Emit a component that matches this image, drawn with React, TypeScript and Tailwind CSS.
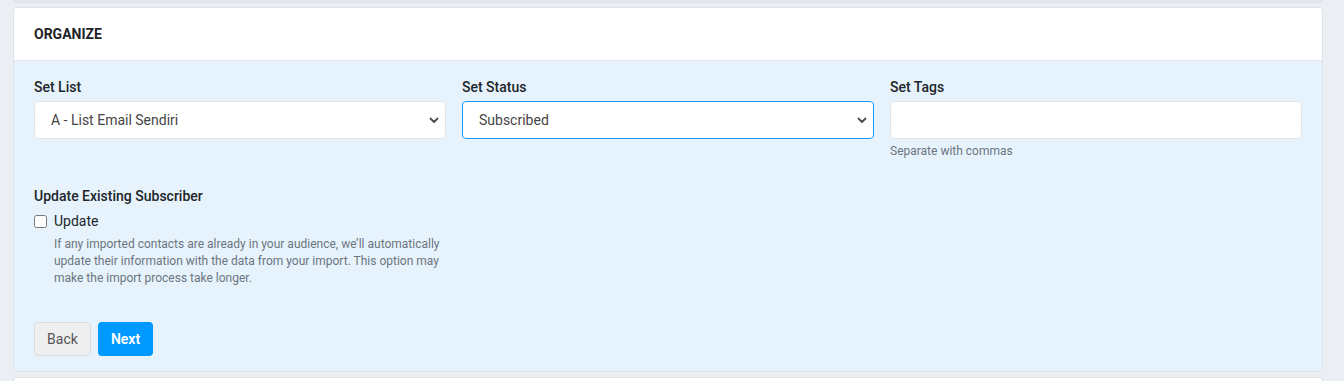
import React, { useState } from 'react';

function Chevron() {
  return (
    <svg className="pointer-events-none absolute right-[6px] top-1/2 -translate-y-1/2" width="12" height="12" viewBox="0 0 12 12" fill="none">
      <path d="M2.5 4.5L6 8L9.5 4.5" stroke="#4a4a4a" strokeWidth="1.8" strokeLinecap="round" strokeLinejoin="round" />
    </svg>
  );
}

function SelectField({ label, value, options, focused }: { label: string; value: string; options: string[]; focused?: boolean }) {
  const [val, setVal] = useState(value);
  return (
    <div className="flex flex-col">
      <label className="mb-1 text-[14px] font-medium leading-5 text-[#212529]">{label}</label>
      <div className="relative">
        <select
          value={val}
          onChange={(e) => setVal(e.target.value)}
          className={`h-[38px] w-full appearance-none rounded-[4px] border bg-white pl-4 pr-8 text-[14px] text-[#444] outline-none ${
            focused ? 'border-[#1a9bf5]' : 'border-[#e1e5e9]'
          }`}
        >
          {options.map((o) => (
            <option key={o}>{o}</option>
          ))}
        </select>
        <Chevron />
      </div>
    </div>
  );
}

export default function App() {
  return (
    <div className="min-h-[381px] bg-[#ebeff3] pl-[13px] pr-[21px] font-['Roboto',sans-serif]">
      {/* bottom of previous card */}
      <div className="h-[3px] rounded-b-[4px] border-b border-x border-[#dfe3e7] bg-[#e4e8ec]" />

      <div className="mt-[4px] overflow-hidden rounded-[4px] border border-[#dfe3e7]">
        <div className="flex h-[53px] items-center border-b border-[#dfe3e7] bg-white px-5">
          <h2 className="text-[14px] font-bold uppercase text-[#1f2326]">Organize</h2>
        </div>

        <div className="bg-[#e6f3fd] px-5 pt-4 pb-[15px]">
          <div className="grid grid-cols-3 gap-4">
            <SelectField label="Set List" value="A - List Email Sendiri" options={['A - List Email Sendiri', 'B - List Pelanggan']} />
            <SelectField label="Set Status" value="Subscribed" options={['Subscribed', 'Unsubscribed']} focused />
            <div className="flex flex-col">
              <label className="mb-1 text-[14px] font-medium leading-5 text-[#212529]">Set Tags</label>
              <input className="h-[38px] w-full rounded-[4px] border border-[#e1e5e9] bg-white px-4 text-[14px] outline-none" />
              <span className="mt-[4px] text-[12px] leading-4 text-[#6c757d]">Separate with commas</span>
            </div>
          </div>

          <div className="mt-[27px]">
            <div className="text-[14px] font-medium leading-5 text-[#212529]">Update Existing Subscriber</div>
            <label className="mt-[5px] flex items-center gap-[7px]">
              <input type="checkbox" className="h-[13px] w-[13px] rounded-[3px] accent-[#0099ff]" />
              <span className="text-[14px] leading-5 text-[#212529]">Update</span>
            </label>
            <p className="mt-[5px] ml-5 w-[390px] text-[12px] leading-[17px] text-[#6c757d]">
              If any imported contacts are already in your audience, we’ll automatically update their information with the data from your import. This option may make the import process take longer.
            </p>
          </div>

          <div className="mt-[35px] flex gap-[7px]">
            <button className="h-[34px] w-[57px] rounded-[4px] border border-[#dcdcdc] bg-[#efefef] text-[14px] text-[#555]">Back</button>
            <button className="h-[34px] w-[55px] rounded-[4px] bg-[#0099ff] text-[14px] font-semibold text-white">Next</button>
          </div>
        </div>
      </div>

      {/* top of next card */}
      <div className="mt-[5px] h-[6px] rounded-t-[4px] border-t border-x border-[#dfe3e7] bg-white" />
    </div>
  );
}
